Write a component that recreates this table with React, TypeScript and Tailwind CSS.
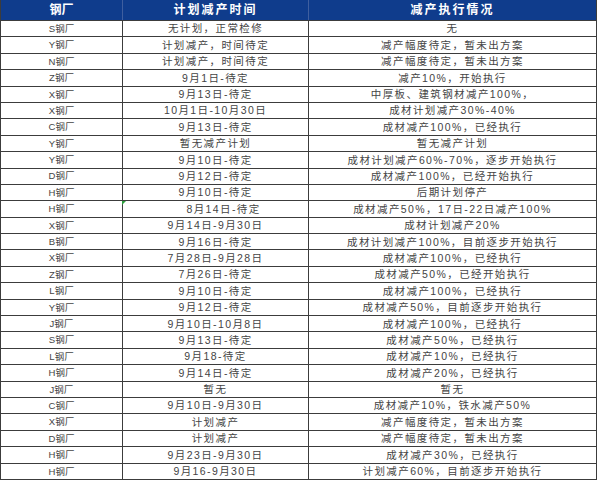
import React from 'react';

type Row = [string, string, string];

// Mill / plan date / execution status
const ROWS: Row[] = [
  ['S钢厂', '无计划，正常检修', '无'],
  ['Y钢厂', '计划减产，时间待定', '减产幅度待定，暂未出方案'],
  ['N钢厂', '计划减产，时间待定', '减产幅度待定，暂未出方案'],
  ['Z钢厂', '9月1日-待定', '减产10%，开始执行'],
  ['X钢厂', '9月13日-待定', '中厚板、建筑钢材减产100%，'],
  ['X钢厂', '10月1日-10月30日', '成材计划减产30%-40%'],
  ['C钢厂', '9月13日-待定', '成材减产100%，已经执行'],
  ['Y钢厂', '暂无减产计划', '暂无减产计划'],
  ['Y钢厂', '9月10日-待定', '成材计划减产60%-70%，逐步开始执行'],
  ['D钢厂', '9月12日-待定', '成材减产100%，已经开始执行'],
  ['H钢厂', '9月10日-待定', '后期计划停产'],
  ['H钢厂', '8月14日-待定', '成材减产50%，17日-22日减产100%'],
  ['X钢厂', '9月14日-9月30日', '成材计划减产20%'],
  ['B钢厂', '9月16日-待定', '成材计划减产100%，目前逐步开始执行'],
  ['X钢厂', '7月28日-9月28日', '成材减产100%，已经执行'],
  ['Z钢厂', '7月26日-待定', '成材减产50%，已经开始执行'],
  ['L钢厂', '9月10日-待定', '成材减产100%，已经执行'],
  ['Y钢厂', '9月12日-待定', '成材减产50%，目前逐步开始执行'],
  ['J钢厂', '9月10日-10月8日', '成材减产100%，已经执行'],
  ['S钢厂', '9月13日-待定', '成材减产50%，已经执行'],
  ['L钢厂', '9月18-待定', '成材减产10%，已经执行'],
  ['H钢厂', '9月14日-待定', '成材减产20%，已经执行'],
  ['J钢厂', '暂无', '暂无'],
  ['C钢厂', '9月10日-9月30日', '成材减产10%，铁水减产50%'],
  ['X钢厂', '计划减产', '减产幅度待定，暂未出方案'],
  ['D钢厂', '计划减产', '减产幅度待定，暂未出方案'],
  ['H钢厂', '9月23日-9月30日', '成材减产30%，已经执行'],
  ['H钢厂', '9月16-9月30日', '计划减产60%，目前逐步开始执行'],
];

export default function App() {
  return (
    <div
      className="w-[600px] h-[482px] bg-white relative"
      style={{ fontFamily: '"Liberation Sans", "Noto Sans CJK SC", sans-serif' }}
    >
      <div className="w-[597px] h-[480px] grid grid-rows-[20px_repeat(28,minmax(0,1fr))] border-l border-r border-b border-[#3c3c3c] text-[#444] leading-none">
        {/* Header */}
        <div className="flex bg-[#0f3c8c] text-white font-bold text-[12px] leading-[20px]">
          <div className="w-[122px] shrink-0 text-center border-r border-[#3f5f9f]">钢厂</div>
          <div className="w-[186px] shrink-0 text-center tracking-[2px] border-r border-[#3f5f9f]">计划减产时间</div>
          <div className="flex-1 text-center tracking-[2px]">减产执行情况</div>
        </div>

        {ROWS.map((r, i) => (
          <div key={i} className="grid grid-cols-[122px_186px_1fr] min-h-0 overflow-hidden border-t border-[#3c3c3c]">
            <div className="flex items-center justify-center text-[9.5px] border-r border-[#3c3c3c]">{r[0]}</div>
            <div
              className={`flex items-center justify-center text-[10.5px] tracking-[1.4px] border-r border-[#3c3c3c] ${
                i === 11 ? 'pl-[16px]' : ''
              }`}
            >
              {r[1]}
            </div>
            <div className="flex items-center justify-center text-[10.5px] tracking-[1.4px]">{r[2]}</div>
          </div>
        ))}
      </div>

      {/* stray cell marker */}
      <div className="absolute left-[122px] top-[201px] w-0 h-0 border-t-[4px] border-t-[#2e9e3e] border-r-[4px] border-r-transparent" />
    </div>
  );
}
